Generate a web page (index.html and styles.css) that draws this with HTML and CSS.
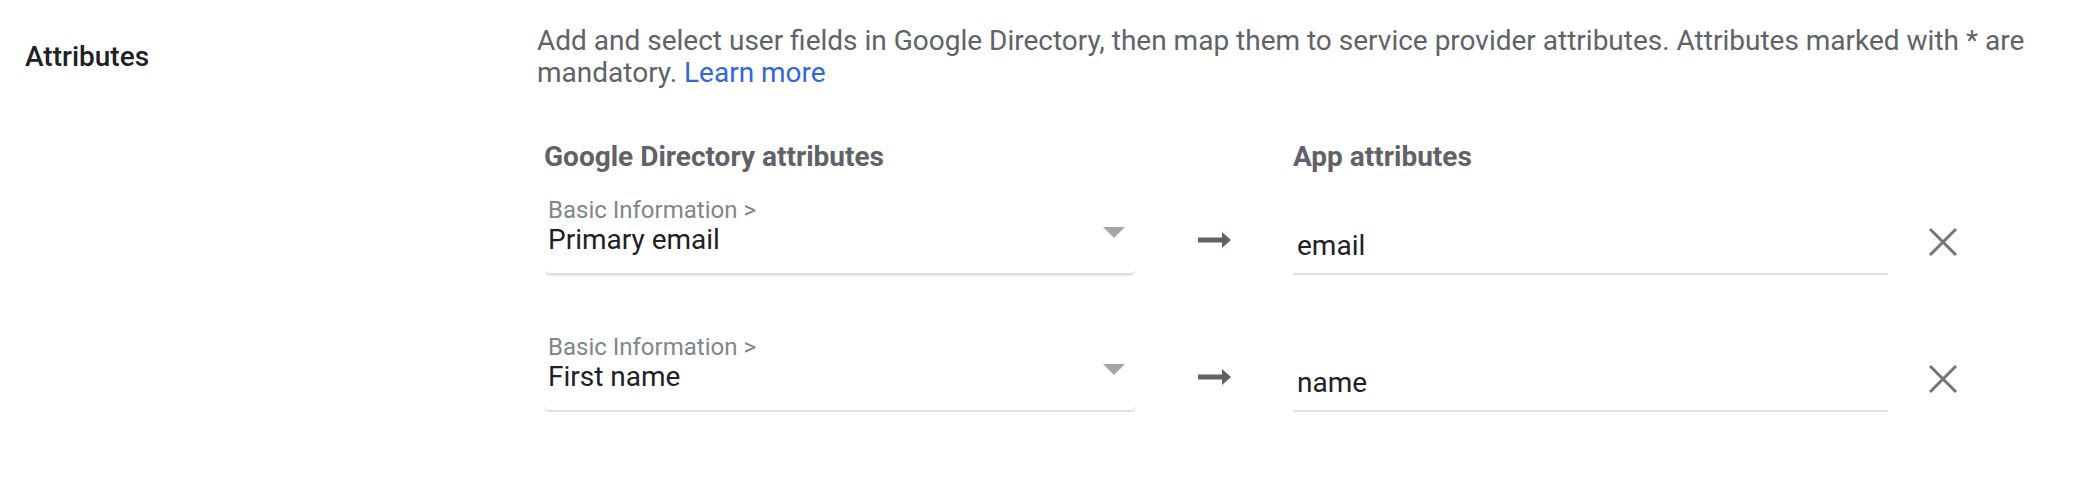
FILE: index.html
```html
<!DOCTYPE html>
<html lang="en">
<head>
<meta charset="utf-8">
<title>Attributes</title>
<link rel="stylesheet" href="styles.css">
</head>
<body>
<div class="section">
  <div class="label">Attributes</div>
  <div class="content">
    <p class="desc">Add and select user fields in Google Directory, then map them to service provider attributes. Attributes marked with * are mandatory. <a class="link" href="#">Learn more</a></p>
    <div class="map">
      <div class="map-grid map-head">
        <div class="head">Google Directory attributes</div>
        <div></div>
        <div class="head">App attributes</div>
        <div></div>
      </div>
      <div class="map-grid map-row">
        <div class="select">
          <div class="sel-text">
            <div class="sel-cat">Basic Information &gt;</div>
            <div class="sel-val">Primary email</div>
          </div>
          <span class="caret"></span>
        </div>
        <div class="arrow">
          <svg width="33" height="16" viewBox="0 0 33 16"><rect x="0" y="5.5" width="25" height="5" fill="#5f6368"/><polygon points="24,0 33,8 24,16" fill="#5f6368"/></svg>
        </div>
        <div class="input">email</div>
        <div class="remove">
          <svg width="30" height="30" viewBox="0 0 30 30"><path d="M2 2 L28 28 M28 2 L2 28" stroke="#757575" stroke-width="3" fill="none"/></svg>
        </div>
      </div>
      <div class="map-grid map-row">
        <div class="select">
          <div class="sel-text">
            <div class="sel-cat">Basic Information &gt;</div>
            <div class="sel-val">First name</div>
          </div>
          <span class="caret"></span>
        </div>
        <div class="arrow">
          <svg width="33" height="16" viewBox="0 0 33 16"><rect x="0" y="5.5" width="25" height="5" fill="#5f6368"/><polygon points="24,0 33,8 24,16" fill="#5f6368"/></svg>
        </div>
        <div class="input">name</div>
        <div class="remove">
          <svg width="30" height="30" viewBox="0 0 30 30"><path d="M2 2 L28 28 M28 2 L2 28" stroke="#757575" stroke-width="3" fill="none"/></svg>
        </div>
      </div>
    </div>
  </div>
</div>
</body>
</html>
```

FILE: styles.css
```css
html, body {
  margin: 0;
  padding: 0;
  background: #ffffff;
}

body {
  font-family: Roboto, "Noto Sans", "Liberation Sans", sans-serif;
  color: #202124;
}

.section {
  display: flex;
  padding-top: 25px;
}

.label {
  width: 512px;
  padding-left: 25px;
  padding-top: 16px;
  font-size: 28px;
  line-height: 32px;
  font-weight: 500;
  color: #202124;
  flex: none;
}

.content {
  flex: 1;
  padding-right: 24px;
}

.desc {
  margin: 0;
  font-size: 28px;
  line-height: 32px;
  color: #5f6368;
}

.link {
  color: #3367d6;
  text-decoration: none;
}

.map {
  margin-left: 7px;
  margin-top: 52px;
}

.map-grid {
  display: grid;
  grid-template-columns: 592px 157px 595px auto;
}

.head {
  font-size: 28px;
  line-height: 32px;
  font-weight: 700;
  color: #5f6368;
}

.map-row {
  align-items: end;
  margin-top: 16px;
}

.map-row + .map-row {
  margin-top: 51px;
}

.select {
  display: flex;
  padding: 7px 11px 17px 4px;
  border-bottom: 2px solid #e0e0e0;
  border-radius: 0 0 6px 6px;
  box-shadow: 0 2px 1px -1px rgba(0, 0, 0, 0.08);
}

.sel-text {
  flex: 1;
}

.sel-cat {
  font-size: 24px;
  line-height: 28px;
  color: #80868b;
}

.sel-val {
  font-size: 28px;
  line-height: 32px;
  color: #202124;
}

.caret {
  margin-top: 31px;
  width: 0;
  height: 0;
  border-left: 11px solid transparent;
  border-right: 11px solid transparent;
  border-top: 11px solid #a6a6a6;
}

.arrow {
  display: flex;
  justify-content: center;
  margin-bottom: 27px;
}

.arrow svg {
  display: block;
}

.input {
  padding: 1px 4px 11px 4px;
  font-size: 28px;
  line-height: 32px;
  color: #202124;
  border-bottom: 2px solid #e0e0e0;
}

.remove {
  margin-left: 40px;
  margin-bottom: 18px;
  width: 30px;
  height: 30px;
}

.remove svg {
  display: block;
}
```
